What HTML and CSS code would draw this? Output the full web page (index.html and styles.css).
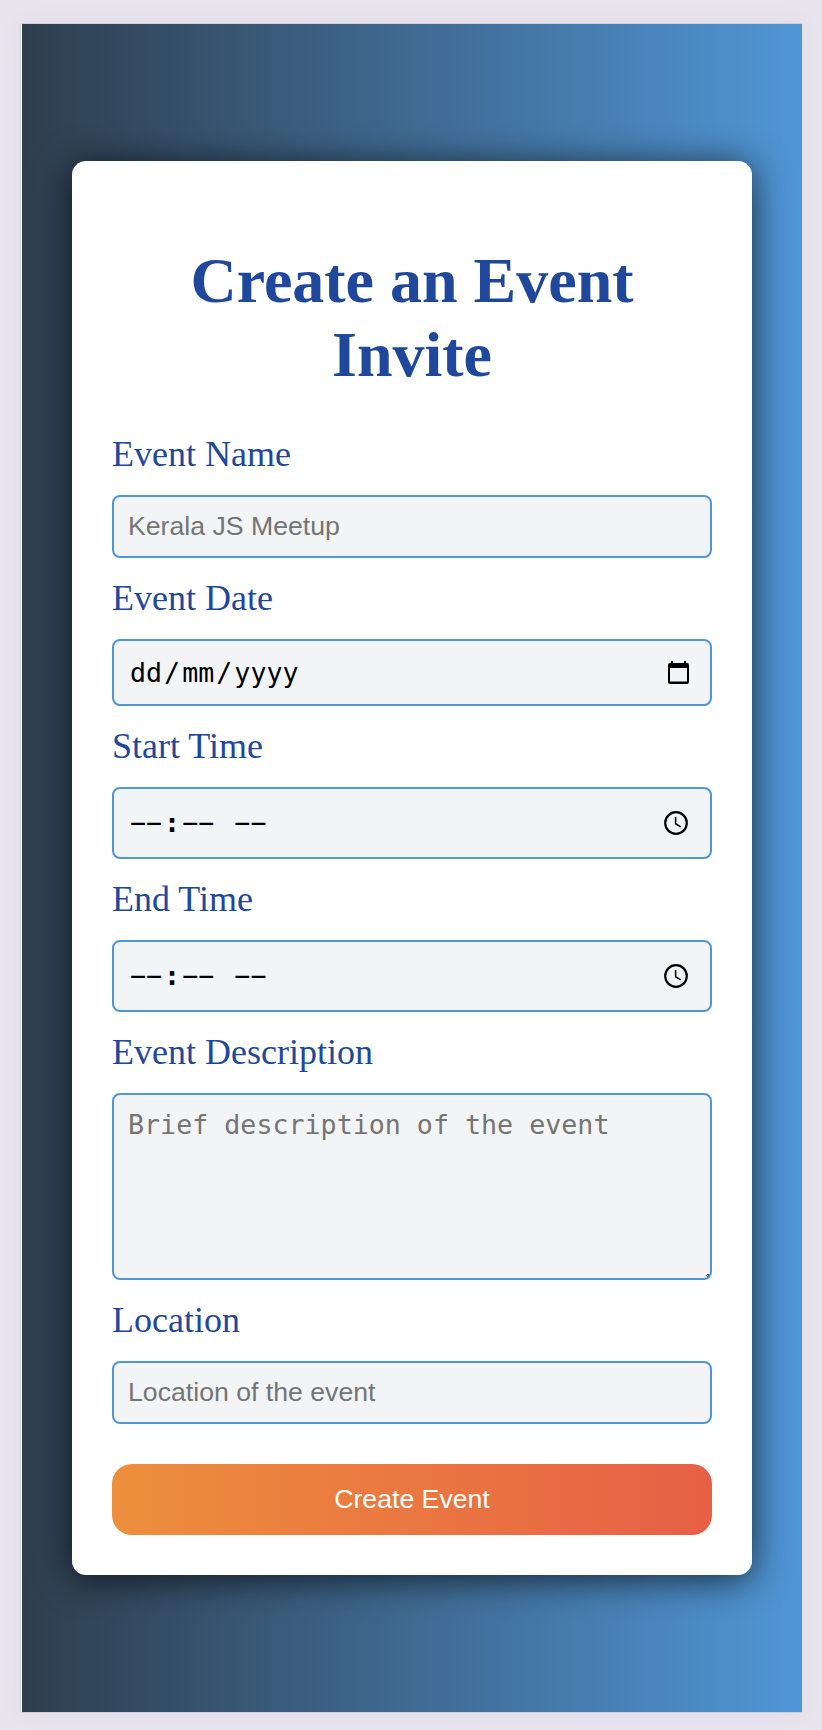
FILE: index.html
```
<!DOCTYPE html>
<html lang="en">
<head>
<meta charset="utf-8">
<title>Create an Event Invite</title>
<link rel="stylesheet" href="styles.css">
</head>
<body>
<main class="panel">
<form class="card">
<h1 class="title">Create an Event Invite</h1>
<label class="label" for="name">Event Name</label>
<input class="field" id="name" type="text" placeholder="Kerala JS Meetup">
<div class="label">Event Date</div>
<div class="field picker picker-date">
<span class="parts"><span>dd</span>/<span>mm</span>/<span>yyyy</span></span>
<svg class="icon-date" viewBox="0 0 22 24"><path fill-rule="evenodd" d="M3 0h2v2h11V0h2v2h1a2 2 0 0 1 2 2v17a2 2 0 0 1-2 2H2a2 2 0 0 1-2-2V4a2 2 0 0 1 2-2h1zM2 7v13.5h17V7z"/></svg>
</div>
<div class="label">Start Time</div>
<div class="field picker picker-time">
<span class="parts"><span>−−</span><b>:</b><span>−−</span> <span>−−</span></span>
<svg class="icon-time" viewBox="0 0 24 24"><circle cx="12" cy="12" r="10.8" fill="none" stroke="#000" stroke-width="2.2"/><path d="M11.6 6v6.7l5.2 3.1" fill="none" stroke="#000" stroke-width="1.5"/></svg>
</div>
<div class="label">End Time</div>
<div class="field picker picker-time">
<span class="parts"><span>−−</span><b>:</b><span>−−</span> <span>−−</span></span>
<svg class="icon-time" viewBox="0 0 24 24"><circle cx="12" cy="12" r="10.8" fill="none" stroke="#000" stroke-width="2.2"/><path d="M11.6 6v6.7l5.2 3.1" fill="none" stroke="#000" stroke-width="1.5"/></svg>
</div>
<label class="label" for="description">Event Description</label>
<div class="area">
<textarea class="field description" id="description" placeholder="Brief description of the event"></textarea>
<svg class="grip" viewBox="0 0 4 3"><path d="M1 0h2v1H1zM0 1h1v1H0zM2 1h1v1H2zM1 2h1v1H1z"/></svg>
</div>
<label class="label" for="location">Location</label>
<input class="field" id="location" type="text" placeholder="Location of the event">
<button class="submit" type="button">Create Event</button>
</form>
</main>
</body>
</html>
```
FILE: styles.css
```
* { box-sizing: border-box; }
body {
  margin: 0;
  padding: 24px 20px 18px 21px;
  background: #e8e5ef;
  font-family: "Liberation Serif", "Times New Roman", serif;
}
.panel {
  height: 1688px;
  padding: 137px 50px;
  border-left: 1px solid #fff;
  background: linear-gradient(90deg, #2f3e4e, #5096d6);
  box-shadow: -1px 0 0 #d2cfd6, 0 -1px 0 #d2cfd6, 0 1px 0 #d2cfd6, 0 0 24px rgba(90, 70, 90, .05);
}
.card {
  display: flex;
  flex-direction: column;
  height: 1414px;
  padding: 40px;
  border-radius: 14px;
  background: #fff;
  box-shadow: 0 4px 36px rgba(0, 0, 0, .7);
}
.title {
  margin: 43px 0 42px;
  font-size: 64px;
  line-height: 74px;
  text-align: center;
  color: #1f479b;
}
.label {
  margin-bottom: 20px;
  font-size: 36px;
  line-height: 41px;
  color: #1f479b;
}
.field {
  width: 100%;
  height: 63px;
  margin: 0 0 20px;
  padding: 0 14px;
  border: 2px solid #5096d5;
  border-radius: 8px;
  outline: 0;
  background: #f3f4f6;
  font: 26.67px/30px "Liberation Sans", Arial, sans-serif;
  color: #000;
}
.field::placeholder { color: #757575; opacity: 1; }
.picker {
  display: flex;
  align-items: center;
  justify-content: space-between;
  font-family: "DejaVu Sans Mono", monospace;
}
.parts { white-space: pre; }
.parts span { padding: 0 2px; }
.picker-date { height: 67px; padding-right: 20px; }
.picker-time { height: 72px; padding-right: 22px; }
.icon-date { width: 22px; height: 24px; }
.icon-time { width: 24px; height: 24px; }
.area { position: relative; height: 187px; margin-bottom: 20px; }
.description {
  display: block;
  height: 187px;
  margin: 0;
  padding: 14px;
  font-family: "DejaVu Sans Mono", monospace;
  line-height: 32px;
  resize: none;
}
.grip { position: absolute; right: 2px; bottom: 3px; width: 4px; height: 3px; fill: #444; }
.submit {
  height: 71px;
  margin-top: 20px;
  padding: 0 0 2px;
  border: 0;
  border-radius: 20px;
  background: linear-gradient(90deg, #ed8f3c, #e75f46);
  font: 26.67px/30px "Liberation Sans", Arial, sans-serif;
  color: #fff;
}
```
